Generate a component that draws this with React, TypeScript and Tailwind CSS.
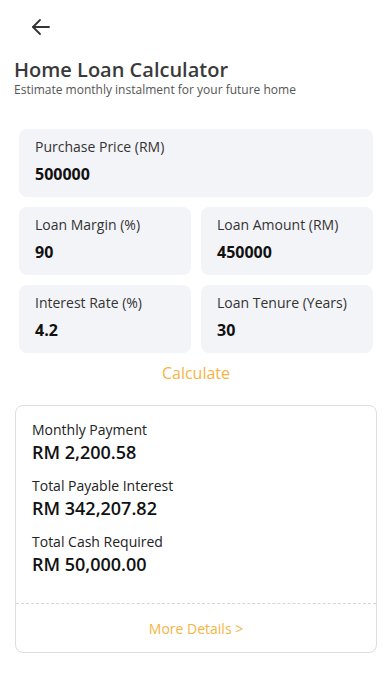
import React from 'react';

const font = { fontFamily: '"Open Sans", "Noto Sans", sans-serif' };

function Field({ label, value }: { label: string; value: string }) {
  return (
    <div className="flex-1 h-[68px] rounded-lg bg-[#f3f4f8] px-4 pt-[8px]">
      <div className="text-[14px] leading-5 text-[#333]">{label}</div>
      <div className="mt-[5px] text-[16px] leading-6 font-bold text-[#111]">{value}</div>
    </div>
  );
}

function Result({ label, value }: { label: string; value: string }) {
  return (
    <div>
      <div className="text-[14px] leading-5 text-[#222]">{label}</div>
      <div className="text-[18px] leading-6 font-semibold text-[#111]">{value}</div>
    </div>
  );
}

export default function App() {
  return (
    <div className="w-[392px] h-[696px] bg-white" style={font}>
      {/* Back button */}
      <div className="h-[54px] flex items-center pl-[29px]">
        <svg width="24" height="24" viewBox="0 0 24 24" fill="none" stroke="#333" strokeWidth="1.8" strokeLinecap="round" strokeLinejoin="round">
          <path d="M20 12H4" />
          <path d="M11 5l-7 7 7 7" />
        </svg>
      </div>

      <div className="px-[14px] pt-[4px]">
        <h1 className="text-[20px] leading-6 font-semibold text-[#3a3a3a]">Home Loan Calculator</h1>
        <p className="text-[12px] leading-4 text-[#555]">Estimate monthly instalment for your future home</p>
      </div>

      <div className="px-[19px] mt-[31px] flex flex-col gap-[10px]">
        <div className="flex">
          <Field label="Purchase Price (RM)" value="500000" />
        </div>
        <div className="flex gap-[10px]">
          <Field label="Loan Margin (%)" value="90" />
          <Field label="Loan Amount (RM)" value="450000" />
        </div>
        <div className="flex gap-[10px]">
          <Field label="Interest Rate (%)" value="4.2" />
          <Field label="Loan Tenure (Years)" value="30" />
        </div>
      </div>

      <div className="mt-2 text-center text-[16px] leading-6 text-[#f6b444]">Calculate</div>

      <div className="mx-[15px] mt-[20px] rounded-lg border border-[#dedede]">
        <div className="px-[16px] pt-[14px] pb-[27px] flex flex-col gap-[12px]">
          <Result label="Monthly Payment" value="RM 2,200.58" />
          <Result label="Total Payable Interest" value="RM 342,207.82" />
          <Result label="Total Cash Required" value="RM 50,000.00" />
        </div>
        <div className="border-t border-dashed border-[#d6d6d6] h-[49px] flex items-center justify-center text-[14px] text-[#f6b444]">
          More Details &gt;
        </div>
      </div>
    </div>
  );
}
